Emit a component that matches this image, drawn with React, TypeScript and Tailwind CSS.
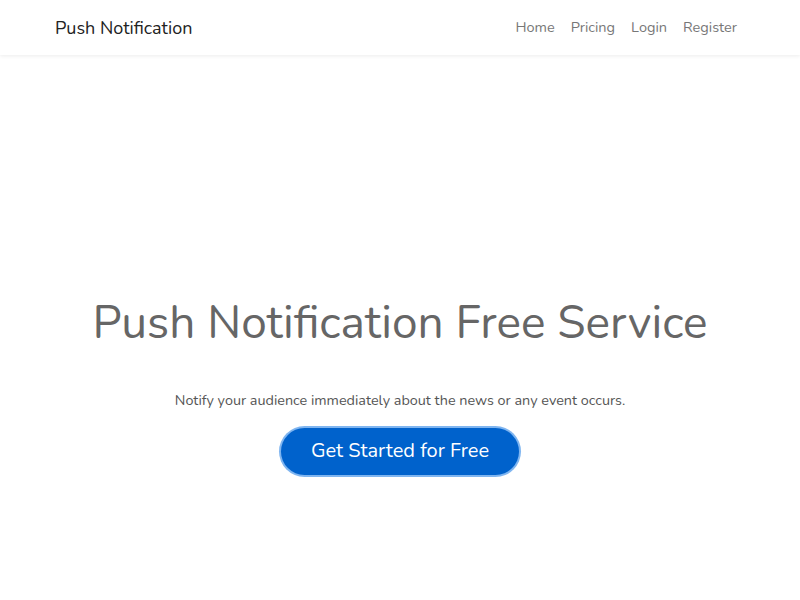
export default function App() {
  const links = ['Home', 'Pricing', 'Login', 'Register'];

  return (
    <div className="min-h-screen bg-white flex flex-col font-['Nunito','Lato','Open_Sans',sans-serif]">
      <nav className="h-[55px] bg-white shadow-[0_1px_4px_rgba(0,0,0,0.08)] flex items-center justify-between px-[55px] pt-[1px] shrink-0">
        <span className="text-[18px] text-[#222]">Push Notification</span>
        <div className="flex items-center gap-4 pr-[8px]">
          {links.map((l) => (
            <a key={l} href="#" className="text-[14.5px] text-[#777]">
              {l}
            </a>
          ))}
        </div>
      </nav>

      <main className="flex-1 flex flex-col items-center pt-[245px]">
        <h1 className="text-[46px] leading-none text-[#666]">Push Notification Free Service</h1>
        <p className="mt-[44px] text-[14.4px] text-[#555]">
          Notify your audience immediately about the news or any event occurs.
        </p>
        <button className="mt-[16px] w-[238px] h-[47px] rounded-full bg-[#0062cc] text-white text-[20px] ring-2 ring-[#7fb5f0]">
          Get Started for Free
        </button>
      </main>
    </div>
  );
}
